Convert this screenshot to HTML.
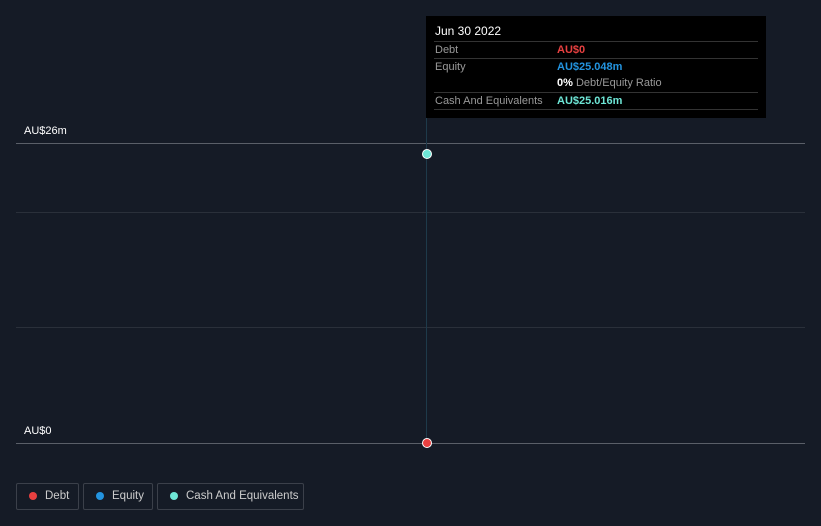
<!DOCTYPE html>
<html><head><style>
html,body{margin:0;width:821px;height:526px;overflow:hidden}
body{background:#151b26;font-family:"Liberation Sans",sans-serif;position:relative;color:#fff}
.a{position:absolute;white-space:nowrap}
.hl{position:absolute;left:16px;width:789px;height:1px}
.tt{position:absolute;left:426px;top:16px;width:340px;height:102px;background:#000}
.r{position:absolute;left:8px;width:324px;border-top:1px solid #333;font-size:11px;color:#999;height:16px;line-height:16px;padding-left:1px;box-sizing:border-box;white-space:nowrap}
.v{position:absolute;left:123px;font-weight:bold}
.btn{position:absolute;top:483px;height:27px;border:1px solid #3b404a;border-radius:2px;font-size:11.5px;color:#ccc;line-height:25px;box-sizing:border-box;white-space:nowrap}
.dot{position:absolute;width:8px;height:8px;border-radius:50%;top:8px;left:12px}
</style></head><body>
<div class="hl" style="top:143px;background:#5a5f68"></div>
<div class="hl" style="top:212px;background:#2a303a"></div>
<div class="hl" style="top:327px;background:#2a303a"></div>
<div class="hl" style="top:443px;background:#5a5f68"></div>
<div class="a" style="left:24px;top:125px;font-size:11px">AU$26m</div>
<div class="a" style="left:24px;top:425px;font-size:11px">AU$0</div>
<div class="a" style="left:426px;top:118px;width:1px;height:325px;background:#1e3a4a"></div>
<div class="a" style="left:422px;top:149px;width:8px;height:8px;border-radius:50%;background:#6ee6d6;border:1px solid #fff"></div>
<div class="a" style="left:422px;top:438px;width:8px;height:8px;border-radius:50%;background:#e84040;border:1px solid #fff"></div>
<div class="tt">
<div class="a" style="left:9px;top:8px;font-size:12px;color:#fff">Jun 30 2022</div>
<div class="r" style="top:25px">Debt<span class="v" style="color:#e84040">AU$0</span></div>
<div class="r" style="top:42px">Equity<span class="v" style="color:#2394e0">AU$25.048m</span></div>
<div class="r" style="top:59px;border-top:none"><span class="v" style="color:#fff">0% <span style="color:#999;font-weight:normal">Debt/Equity Ratio</span></span></div>
<div class="r" style="top:76px">Cash And Equivalents<span class="v" style="color:#6ee6d6">AU$25.016m</span></div>
<div class="r" style="top:93px;height:0"></div>
</div>
<div class="btn" style="left:16px;width:63px"><span class="dot" style="background:#e84040"></span><span style="position:absolute;left:28px">Debt</span></div>
<div class="btn" style="left:83px;width:70px"><span class="dot" style="background:#2394e0"></span><span style="position:absolute;left:28px">Equity</span></div>
<div class="btn" style="left:157px;width:147px"><span class="dot" style="background:#6ee6d6"></span><span style="position:absolute;left:28px">Cash And Equivalents</span></div>
</body></html>
